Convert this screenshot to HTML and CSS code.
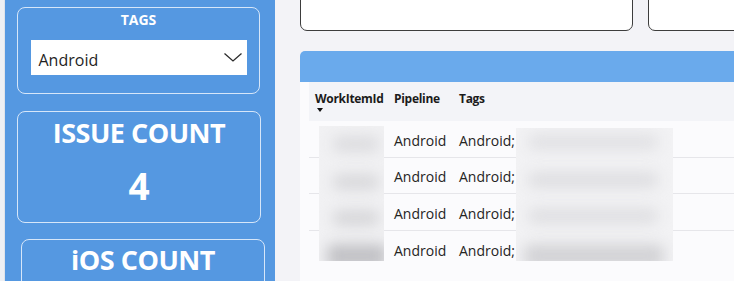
FILE: index.html
```html
<!DOCTYPE html>
<html lang="en">
<head>
<meta charset="utf-8">
<title>Issues dashboard</title>
<link rel="stylesheet" href="styles.css">
</head>
<body>
<div class="page">
  <div class="edge"></div>
  <aside class="sidebar">
    <div class="card tags-card">
      <div class="card-title">TAGS</div>
      <div class="select">
        <span class="select-value">Android</span>
        <svg class="chevron" width="18" height="9" viewBox="0 0 18 9"><polyline points="0.5,0.6 9,8 17.5,0.6" fill="none" stroke="#2b2b2b" stroke-width="1.3"/></svg>
      </div>
    </div>
    <div class="card count-card">
      <div class="count-title">ISSUE COUNT</div>
      <div class="count-value">4</div>
    </div>
    <div class="card count-card ios-card">
      <div class="count-title">iOS COUNT</div>
    </div>
  </aside>
  <main class="content">
    <div class="top-tiles">
      <div class="tile tile-wide"></div>
      <div class="tile tile-rest"></div>
    </div>
    <section class="table-panel">
      <div class="panel-head"></div>
      <div class="table">
        <div class="row head-row">
          <div class="cell col-id"><span>WorkItemId</span><span class="sort-arrow"></span></div>
          <div class="cell col-pipe">Pipeline</div>
          <div class="cell col-tags">Tags</div>
        </div>
        <div class="row data-row"><div class="cell col-id"></div><div class="cell col-pipe">Android</div><div class="cell col-tags">Android;</div></div>
        <div class="row data-row"><div class="cell col-id"></div><div class="cell col-pipe">Android</div><div class="cell col-tags">Android;</div></div>
        <div class="row data-row"><div class="cell col-id"></div><div class="cell col-pipe">Android</div><div class="cell col-tags">Android;</div></div>
        <div class="row data-row last"><div class="cell col-id"></div><div class="cell col-pipe">Android</div><div class="cell col-tags">Android;</div></div>
      </div>
      <div class="redact redact-id">
        <div class="smear s1"></div><div class="smear s2"></div><div class="smear s3"></div><div class="smear s4"></div>
      </div>
      <div class="redact redact-tags">
        <div class="smear t1"></div><div class="smear t2"></div><div class="smear t3"></div><div class="smear t4"></div>
      </div>
    </section>
  </main>
</div>
</body>
</html>
```

FILE: styles.css
```css
* { box-sizing: border-box; }
html, body { margin: 0; padding: 0; }
body {
  width: 734px;
  height: 281px;
  overflow: hidden;
  background: #f3f3f7;
  font-family: "Open Sans", "Noto Sans", sans-serif;
}
.page {
  display: flex;
  height: 281px;
  overflow: hidden;
}
.edge {
  width: 5px;
  flex: none;
  background: #eef0f4;
  border-right: 1px solid #dfe3ea;
}
.sidebar {
  width: 270px;
  flex: none;
  background: #5598e1;
  padding-top: 7px;
  display: flex;
  flex-direction: column;
}
.card {
  border: 1.5px solid #d6e6f9;
  border-radius: 8px;
  color: #fff;
  flex: none;
}
.tags-card {
  margin-left: 12px;
  width: 243px;
  height: 87px;
  padding: 2px 12.5px 0;
}
.card-title {
  font-weight: 700;
  font-size: 14px;
  line-height: 18px;
  text-align: center;
  margin-top: 1px;
}
.select {
  margin-top: 11px;
  height: 35px;
  background: #fff;
  display: flex;
  align-items: center;
  justify-content: space-between;
  padding: 5px 5px 0 8px;
}
.select-value {
  color: #1f1f1f;
  font-size: 16px;
}
.chevron { display: block; margin-top: -5px; }
.count-card {
  margin-left: 12px;
  margin-top: 17px;
  width: 244px;
  height: 112px;
  text-align: center;
  font-weight: 700;
}
.count-title {
  font-size: 27px;
  line-height: 36px;
  margin-top: 3px;
  letter-spacing: -0.5px;
}
.count-value {
  font-size: 37px;
  line-height: 44px;
  margin-top: 13px;
}
.ios-card {
  margin-left: 16px;
  margin-top: 16px;
  height: 60px;
}
.ios-card .count-title { margin-top: 2px; }

.content {
  flex: 1;
  margin-left: 23px;
  display: flex;
  flex-direction: column;
  min-width: 0;
}
.top-tiles {
  display: flex;
  gap: 15px;
  margin-top: -10px;
  padding-left: 2px;
}
.tile {
  height: 41px;
  background: #fff;
  border: 1.5px solid #3d3d3d;
  border-radius: 7px;
  flex: none;
}
.tile-wide { width: 333px; }
.tile-rest { width: 200px; }
.table-panel {
  position: relative;
  margin-top: 20px;
  margin-left: 2px;
  width: 460px;
  height: 240px;
  background: #fbfbfd;
  border-radius: 5px 0 0 0;
}
.panel-head {
  height: 31px;
  background: #6aaaec;
  border-radius: 5px 0 0 0;
}
.table {
  padding-left: 9px;
  color: #252423;
}
.row {
  display: flex;
}
.cell { flex: none; padding-left: 6px; }
.col-id { width: 79px; }
.col-pipe { width: 65px; }
.col-tags { flex: 1; }
.head-row {
  height: 39px;
  background: #f3f4f8;
  font-weight: 700;
  font-size: 12px;
  line-height: 16px;
  letter-spacing: -0.3px;
  color: #1b1b1b;
}
.head-row .cell { padding-top: 9px; }
.head-row .col-id { display: flex; flex-direction: column; align-items: flex-start; }
.sort-arrow {
  display: block;
  margin-top: 1px;
  margin-left: 2px;
  width: 0;
  height: 0;
  border-left: 3.5px solid transparent;
  border-right: 3.5px solid transparent;
  border-top: 4px solid #111;
}
.data-row {
  height: 36.67px;
  border-bottom: 1px solid #e6e6ea;
  font-size: 14px;
  align-items: center;
  padding-top: 3px;
}
.data-row.last { border-bottom: none; }

.redact {
  position: absolute;
  overflow: hidden;
  background: #f1f1f3;
}
.redact-id { left: 19px; top: 75px; width: 65px; height: 135px; }
.redact-tags { left: 216px; top: 77px; width: 157px; height: 133px; background: #f2f2f4; }
.smear {
  position: absolute;
  filter: blur(7px);
  border-radius: 6px;
}
.s1 { left: 14px; top: 10px; width: 46px; height: 16px; background: #dcdcdf; }
.s2 { left: 14px; top: 48px; width: 46px; height: 16px; background: #d8d8db; }
.s3 { left: 14px; top: 84px; width: 46px; height: 16px; background: #d6d6d9; }
.s4 { left: 8px; top: 118px; width: 60px; height: 24px; background: #c2c2c6; }
.t1 { left: 12px; top: 6px; width: 130px; height: 16px; background: #e1e1e4; }
.t2 { left: 12px; top: 44px; width: 130px; height: 16px; background: #dedee1; }
.t3 { left: 12px; top: 80px; width: 130px; height: 16px; background: #dfdfe2; }
.t4 { left: 8px; top: 116px; width: 140px; height: 24px; background: #d3d3d6; }
```
